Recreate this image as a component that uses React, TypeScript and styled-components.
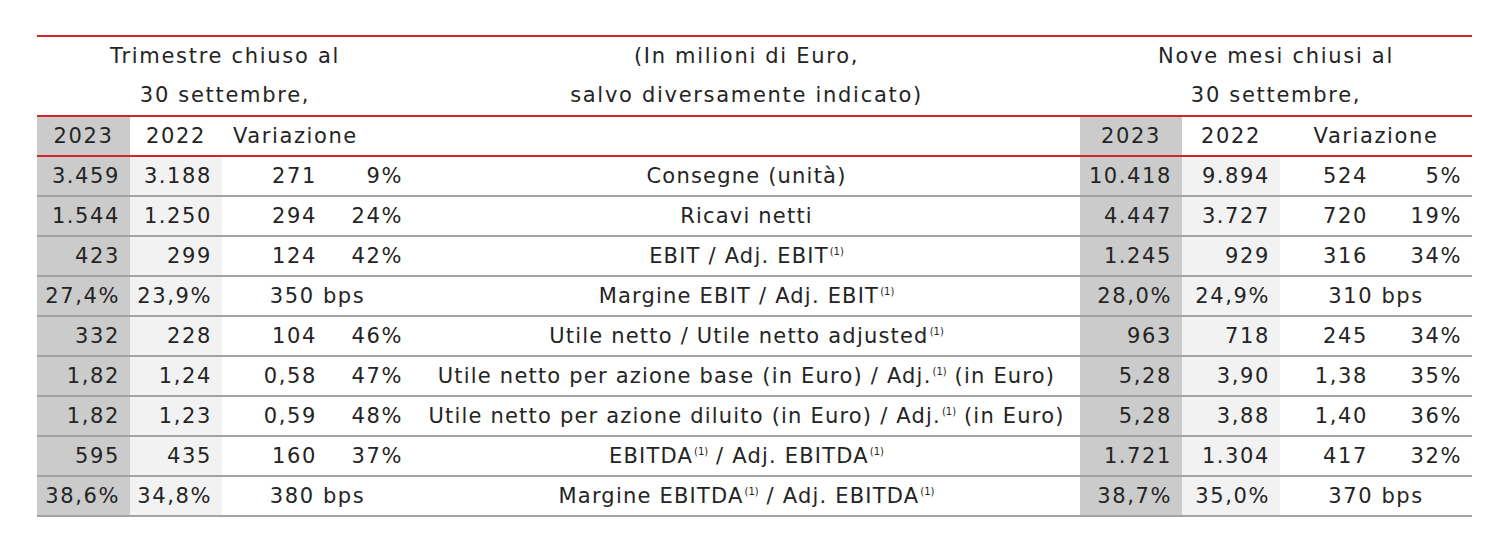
import React from "react";
import styled, { createGlobalStyle } from "styled-components";

const Global = createGlobalStyle`
  html, body { margin: 0; padding: 0; background: #ffffff; }
  body { font-family: "DejaVu Sans", "Liberation Sans", sans-serif; color: #242424; }
`;

const Page = styled.div`
  padding: 35px 0 0 37px;
`;

const Table = styled.table`
  width: 1435px;
  table-layout: fixed;
  border-collapse: collapse;
  border-top: 2px solid #d3262c;
  font-size: 21px;
  letter-spacing: 1.6px;
`;

const TitleCell = styled.td`
  height: 77px;
  padding: 0;
  text-align: center;
  vertical-align: middle;
  line-height: 39px;
  border-bottom: 2px solid #d3262c;
  letter-spacing: 1.7px;
`;

type Bg = "dark" | "light" | "none";
const bgColor = (bg?: Bg) =>
  bg === "dark" ? "#cbcbcb" : bg === "light" ? "#f2f2f2" : "transparent";

const YearCell = styled.td<{ $bg?: Bg; $align?: string; $pad?: string }>`
  height: 38px;
  padding: ${(p) => p.$pad ?? "0"};
  text-align: ${(p) => p.$align ?? "center"};
  vertical-align: middle;
  background: ${(p) => bgColor(p.$bg)};
  border-bottom: 2px solid #d3262c;
  white-space: nowrap;
`;

const Cell = styled.td<{ $bg?: Bg; $align?: string }>`
  height: 38px;
  padding: 0 10px 0 0;
  text-align: ${(p) => p.$align ?? "right"};
  vertical-align: middle;
  background: ${(p) => bgColor(p.$bg)};
  border-bottom: 2px solid #a3a3a3;
  white-space: nowrap;
`;

const LabelCell = styled.td`
  height: 38px;
  padding: 0;
  text-align: center;
  vertical-align: middle;
  border-bottom: 2px solid #a3a3a3;
  white-space: nowrap;
  letter-spacing: 1.2px;
`;

const BpsCell = styled(Cell)`
  text-align: center;
  padding: 0;
`;

const Sup = styled.sup`
  font-size: 10px;
  letter-spacing: 0;
  vertical-align: 0;
  position: relative;
  top: -8px;
  margin-left: 1px;
`;

type Side = [string, string, string, string] | [string, string, string];

interface DataRow {
  label: React.ReactNode;
  left: Side;
  right: Side;
}

const S = () => <Sup>(1)</Sup>;

const rows: DataRow[] = [
  { label: "Consegne (unità)", left: ["3.459", "3.188", "271", "9%"], right: ["10.418", "9.894", "524", "5%"] },
  { label: "Ricavi netti", left: ["1.544", "1.250", "294", "24%"], right: ["4.447", "3.727", "720", "19%"] },
  { label: <>EBIT / Adj. EBIT<S /></>, left: ["423", "299", "124", "42%"], right: ["1.245", "929", "316", "34%"] },
  { label: <>Margine EBIT / Adj. EBIT<S /></>, left: ["27,4%", "23,9%", "350 bps"], right: ["28,0%", "24,9%", "310 bps"] },
  { label: <>Utile netto / Utile netto adjusted<S /></>, left: ["332", "228", "104", "46%"], right: ["963", "718", "245", "34%"] },
  { label: <>Utile netto per azione base (in Euro) / Adj.<S /> (in Euro)</>, left: ["1,82", "1,24", "0,58", "47%"], right: ["5,28", "3,90", "1,38", "35%"] },
  { label: <>Utile netto per azione diluito (in Euro) / Adj.<S /> (in Euro)</>, left: ["1,82", "1,23", "0,59", "48%"], right: ["5,28", "3,88", "1,40", "36%"] },
  { label: <>EBITDA<S /> / Adj. EBITDA<S /></>, left: ["595", "435", "160", "37%"], right: ["1.721", "1.304", "417", "32%"] },
  { label: <>Margine EBITDA<S /> / Adj. EBITDA<S /></>, left: ["38,6%", "34,8%", "380 bps"], right: ["38,7%", "35,0%", "370 bps"] },
];

const SideCells: React.FC<{ v: Side }> = ({ v }) => (
  <>
    <Cell $bg="dark">{v[0]}</Cell>
    <Cell $bg="light">{v[1]}</Cell>
    {v.length === 4 ? (
      <>
        <Cell>{v[2]}</Cell>
        <Cell>{v[3]}</Cell>
      </>
    ) : (
      <BpsCell colSpan={2}>{v[2]}</BpsCell>
    )}
  </>
);

export default function App() {
  return (
    <Page>
      <Global />
      <Table>
        <colgroup>
          <col style={{ width: 93 }} />
          <col style={{ width: 92 }} />
          <col style={{ width: 105 }} />
          <col style={{ width: 86 }} />
          <col style={{ width: 667 }} />
          <col style={{ width: 102 }} />
          <col style={{ width: 98 }} />
          <col style={{ width: 98 }} />
          <col style={{ width: 94 }} />
        </colgroup>
        <tbody>
          <tr>
            <TitleCell colSpan={4}>
              Trimestre chiuso al
              <br />
              30 settembre,
            </TitleCell>
            <TitleCell>
              (In milioni di Euro,
              <br />
              salvo diversamente indicato)
            </TitleCell>
            <TitleCell colSpan={4}>
              Nove mesi chiusi al
              <br />
              30 settembre,
            </TitleCell>
          </tr>
          <tr>
            <YearCell $bg="dark">2023</YearCell>
            <YearCell>2022</YearCell>
            <YearCell colSpan={2} $align="left" $pad="0 0 0 11px">
              Variazione
            </YearCell>
            <YearCell />
            <YearCell $bg="dark">2023</YearCell>
            <YearCell>2022</YearCell>
            <YearCell colSpan={2}>Variazione</YearCell>
          </tr>
          {rows.map((r, i) => (
            <tr key={i}>
              <SideCells v={r.left} />
              <LabelCell>{r.label}</LabelCell>
              <SideCells v={r.right} />
            </tr>
          ))}
        </tbody>
      </Table>
    </Page>
  );
}
